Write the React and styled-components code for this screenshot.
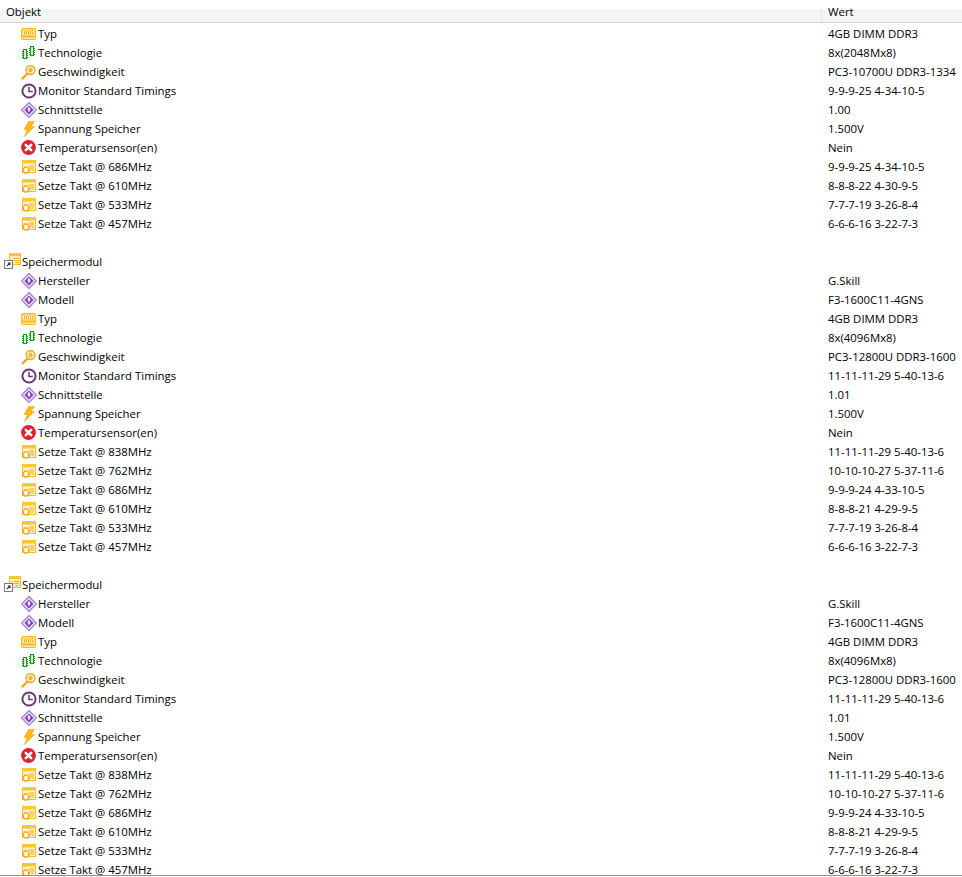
import styled, { createGlobalStyle } from "styled-components";

const GlobalStyle = createGlobalStyle`
    html, body {
        margin: 0;
        padding: 0;
        background: #fff;
    }
`;

const commonTail = (speed, timings, iface) => [
    ["key", "Geschwindigkeit", speed],
    ["clock", "Monitor Standard Timings", timings],
    ["gem", "Schnittstelle", iface],
    ["bolt", "Spannung Speicher", "1.500V"],
    ["error", "Temperatursensor(en)", "Nein"],
];

const firstRows = [
    ["ram", "Typ", "4GB DIMM DDR3"],
    ["chips", "Technologie", "8x(2048Mx8)"],
    ...commonTail("PC3-10700U DDR3-1334", "9-9-9-25 4-34-10-5", "1.00"),
    ["clk", "Setze Takt @ 686MHz", "9-9-9-25 4-34-10-5"],
    ["clk", "Setze Takt @ 610MHz", "8-8-8-22 4-30-9-5"],
    ["clk", "Setze Takt @ 533MHz", "7-7-7-19 3-26-8-4"],
    ["clk", "Setze Takt @ 457MHz", "6-6-6-16 3-22-7-3"],
];

const moduleRows = [
    ["gem", "Hersteller", "G.Skill"],
    ["gem", "Modell", "F3-1600C11-4GNS"],
    ["ram", "Typ", "4GB DIMM DDR3"],
    ["chips", "Technologie", "8x(4096Mx8)"],
    ...commonTail("PC3-12800U DDR3-1600", "11-11-11-29 5-40-13-6", "1.01"),
    ["clk", "Setze Takt @ 838MHz", "11-11-11-29 5-40-13-6"],
    ["clk", "Setze Takt @ 762MHz", "10-10-10-27 5-37-11-6"],
    ["clk", "Setze Takt @ 686MHz", "9-9-9-24 4-33-10-5"],
    ["clk", "Setze Takt @ 610MHz", "8-8-8-21 4-29-9-5"],
    ["clk", "Setze Takt @ 533MHz", "7-7-7-19 3-26-8-4"],
    ["clk", "Setze Takt @ 457MHz", "6-6-6-16 3-22-7-3"],
];

function RamIcon() {
    return (
        <svg width="16" height="16" viewBox="0 0 16 16">
            <rect x="0.5" y="2.5" width="14" height="11" rx="1" fill="#ffd766" stroke="#f7bb2c" />
            <rect x="2" y="5" width="11" height="3" fill="#fff0c0" />
            <path d="M3.5 5v3M5.5 5v3M7.5 5v3M9.5 5v3M11.5 5v3" stroke="#eeb02a" />
            <path d="M2 10.5h11" stroke="#f3a91c" />
            <path d="M3 12v1M5 12v1M7 12v1M9 12v1M11 12v1" stroke="#fff0c0" />
        </svg>
    );
}

function ChipsIcon() {
    return (
        <svg width="16" height="16" viewBox="0 0 16 16" shapeRendering="crispEdges">
            <rect x="2.5" y="4.5" width="3" height="9" fill="#dff3d6" stroke="#11a011" />
            <rect x="9.5" y="1.5" width="3" height="9" fill="#dff3d6" stroke="#11a011" />
            <path d="M1 6.5h1M1 8.5h1M1 10.5h1M1 12.5h1M6 6.5h1M6 8.5h1M6 10.5h1M6 12.5h1M8 3.5h1M8 5.5h1M8 7.5h1M8 9.5h1M13 3.5h1M13 5.5h1M13 7.5h1M13 9.5h1" stroke="#11a011" />
        </svg>
    );
}

function KeyIcon() {
    return (
        <svg width="16" height="16" viewBox="0 0 16 16">
            <path d="M7.5 8.5L1.5 14.5" stroke="#eda91c" strokeWidth="2.4" strokeLinecap="round" />
            <circle cx="9.5" cy="6" r="4.4" fill="#fff3c0" stroke="#eeb02a" strokeWidth="1.6" />
            <circle cx="9.5" cy="6" r="1.8" fill="#f6c544" stroke="#c98a10" strokeWidth="0.6" />
        </svg>
    );
}

function ClockIcon() {
    return (
        <svg width="16" height="16" viewBox="0 0 16 16">
            <circle cx="8" cy="8" r="6.6" fill="#fff" stroke="#673a74" strokeWidth="2" />
            <path d="M8 3.8V8.5H11.8" fill="none" stroke="#673a74" strokeWidth="1.5" />
        </svg>
    );
}

function GemIcon() {
    return (
        <svg width="16" height="16" viewBox="0 0 16 16">
            <path d="M8 0.5L15.5 8L8 15.5L0.5 8Z" fill="#e6d9f5" stroke="#a27fd0" strokeWidth="1.2" />
            <path d="M8 3.5L12.5 8L8 12.5L3.5 8Z" fill="#7c46b4" />
            <ellipse cx="8" cy="7.5" rx="1.3" ry="2.2" fill="#f1e8f9" />
        </svg>
    );
}

function BoltIcon() {
    return (
        <svg width="16" height="16" viewBox="0 0 16 16">
            <path d="M7.5 0.5H13.5L10 5.5H13.5L3.5 15.5L6.4 8.5H3Z" fill="#f9b91a" stroke="#eb9f10" strokeWidth="0.5" />
        </svg>
    );
}

function ErrorIcon() {
    return (
        <svg width="16" height="16" viewBox="0 0 16 16">
            <circle cx="7.5" cy="7.5" r="7.4" fill="#e0212b" />
            <path d="M4.8 4.8L10.2 10.2M10.2 4.8L4.8 10.2" stroke="#fff" strokeWidth="2.6" strokeLinecap="round" />
        </svg>
    );
}

function ClkIcon() {
    return (
        <svg width="16" height="16" viewBox="0 0 16 16">
            <rect x="1.5" y="1.5" width="13" height="12" fill="#fff3c8" stroke="#f6bb27" />
            <rect x="1" y="1" width="14" height="3.5" fill="#fac732" />
            <path d="M8 7h5M9 9h4M10 11h3" stroke="#e9a91f" />
            <circle cx="5" cy="11" r="3" fill="#fff" stroke="#f2a612" strokeWidth="2" strokeDasharray="1.8 0.6" />
            <circle cx="5" cy="11" r="0.9" fill="#fff" />
        </svg>
    );
}

function ModuleIcon() {
    return (
        <svg width="17" height="17" viewBox="0 0 17 17">
            <rect x="5.5" y="0.5" width="11" height="11" fill="#ffeeb0" stroke="#f6bb27" />
            <rect x="5" y="0" width="12" height="3" fill="#fac732" />
            <path d="M9.5 5.5h6M9.5 7.5h6M11.5 9.5h4" stroke="#eeb02a" />
            <rect x="0.5" y="7.5" width="8" height="8" fill="#fff" stroke="#7a7a7a" />
            <path d="M2.8 13.2L6 10M3.8 10H6V12.2" fill="none" stroke="#333" strokeWidth="1.1" />
        </svg>
    );
}

const icons = {
    ram: RamIcon,
    chips: ChipsIcon,
    key: KeyIcon,
    clock: ClockIcon,
    gem: GemIcon,
    bolt: BoltIcon,
    error: ErrorIcon,
    clk: ClkIcon,
};

function ItemRows({ rows }) {
    return rows.map(([icon, name, value], i) => {
        const Icon = icons[icon];
        return (
            <Row key={i}>
                <NameCell $indent>
                    <IconBox>
                        <Icon />
                    </IconBox>
                    {name}
                </NameCell>
                <ValueCell>{value}</ValueCell>
            </Row>
        );
    });
}

function GroupRow() {
    return (
        <Row>
            <NameCell>
                <GroupIconBox>
                    <ModuleIcon />
                </GroupIconBox>
                Speichermodul
            </NameCell>
        </Row>
    );
}

export default function App() {
    return (
        <Page>
            <GlobalStyle />
            <Header>
                <HeadName>Objekt</HeadName>
                <HeadValue>Wert</HeadValue>
            </Header>
            <List>
                <ItemRows rows={firstRows} />
                <Row />
                <GroupRow />
                <ItemRows rows={moduleRows} />
                <Row />
                <GroupRow />
                <ItemRows rows={moduleRows} />
            </List>
        </Page>
    );
}

const Page = styled.div`
    width: 962px;
    height: 877px;
    overflow: hidden;
    background: #fff;
    color: #000;
    font-family: "Open Sans", "Noto Sans", sans-serif;
    font-size: 11.4px;
    white-space: nowrap;
`;

const Header = styled.div`
    display: flex;
    height: 13px;
    margin-top: 9px;
    background: #f4f5f6;
    border-bottom: 1px solid #d5d5d5;
    line-height: 5px;
`;

const HeadName = styled.div`
    width: 815px;
    padding-left: 6px;
    border-right: 1px solid #e3e4e6;
`;

const HeadValue = styled.div`
    padding-left: 6px;
`;

const List = styled.div`
    height: 851px;
    padding-top: 1px;
    overflow: hidden;
    border-bottom: 1px solid #8e8e8e;
`;

const Row = styled.div`
    display: flex;
    align-items: center;
    height: 19px;
`;

const NameCell = styled.div`
    display: flex;
    align-items: center;
    width: 822px;
    padding-left: ${(p) => (p.$indent ? "21px" : "4px")};
    box-sizing: border-box;
`;

const ValueCell = styled.div`
    padding-left: 6px;
`;

const IconBox = styled.span`
    display: flex;
    width: 17px;
    height: 16px;
`;

const GroupIconBox = styled.span`
    display: flex;
    width: 18px;
    height: 17px;
`;
